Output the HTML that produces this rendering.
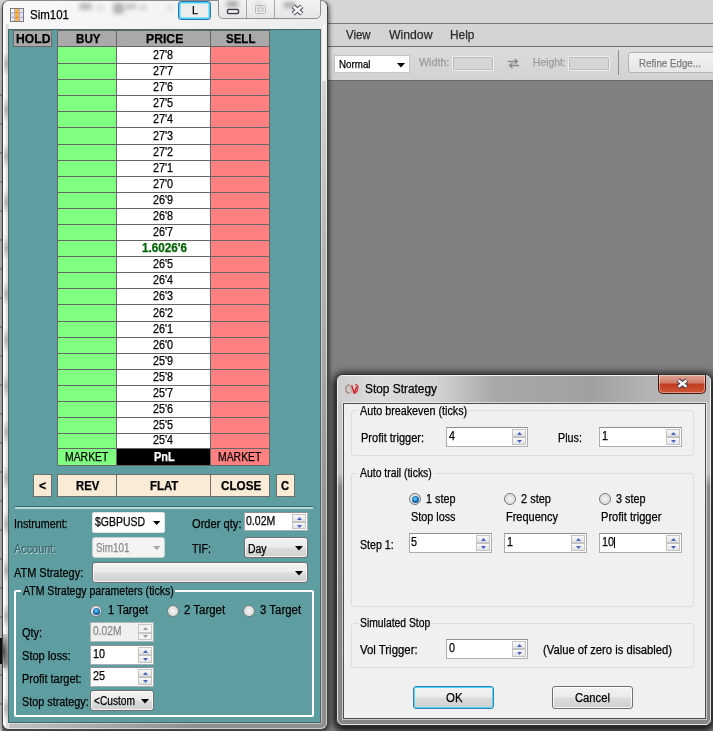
<!DOCTYPE html>
<html><head><meta charset="utf-8"><title>Sim101</title>
<style>
html,body{margin:0;padding:0;}
body{width:713px;height:731px;position:relative;overflow:hidden;background:#808080;font-family:"Liberation Sans",sans-serif;}
div{position:absolute;box-sizing:border-box;}
section{position:absolute;left:0;top:0;width:0;height:0;}
.t{-webkit-text-stroke:.25px currentColor;position:absolute;white-space:nowrap;line-height:1;transform-origin:0 0;display:block;}
svg{position:absolute;overflow:visible;}
.combo{border:1px solid #707070;border-radius:3px;background:linear-gradient(#f2f2f2 0%,#ebebeb 48%,#dddddd 52%,#cfcfcf 100%);box-shadow:inset 0 0 0 1px rgba(255,255,255,.7);}
.spin{background:#fff;border:1px solid #abadb3;border-top-color:#8e8f93;}
.sb{border:1px solid #c4c4c4;background:linear-gradient(#f8f8f8,#e4e4e4);}
.radio{border-radius:50%;border:1px solid #727c7d;background:radial-gradient(circle at 50% 50%,#f6f6f6 0,#e4e4e4 45%,#b8b8b8 100%);box-shadow:inset 0 0 0 1px rgba(255,255,255,.5);}
.btn{border:1px solid #707070;border-radius:3px;background:linear-gradient(#f2f2f2 0%,#ebebeb 48%,#dddddd 52%,#cfcfcf 100%);box-shadow:inset 0 0 0 1px rgba(255,255,255,.8);}
.gb{border:1px solid #d5dfe5;border-radius:3px;}

</style></head><body>
<section aria-label="Background application">
<div style="left:0px;top:0px;width:713px;height:23px;background:#d6d6d6;"></div>
<div style="left:0px;top:23px;width:713px;height:1px;background:#7a7a7a;"></div>
<div style="left:0px;top:24px;width:713px;height:22px;background:#d4d4d4;"></div>
<div style="left:0px;top:45.5px;width:713px;height:1.5px;background:#6e6e6e;"></div>
<div style="left:0px;top:47px;width:713px;height:33px;background:linear-gradient(#dcdcdc,#d2d2d2);"></div>
<div style="left:0px;top:80px;width:713px;height:1px;background:#6a6a6a;"></div>
<span class="t" style="left:346.0px;top:28px;font-size:13px;color:#2a2a2a;transform:scaleX(0.877);">View</span>
<span class="t" style="left:389.3px;top:28px;font-size:13px;color:#2a2a2a;transform:scaleX(0.940);">Window</span>
<span class="t" style="left:450.4px;top:28px;font-size:13px;color:#2a2a2a;transform:scaleX(0.913);">Help</span>
<span class="t" style="left:327.3px;top:58px;font-size:11px;color:#2a3a90;transform:scaleX(0.552);">:</span>
<div style="left:334px;top:55px;width:76px;height:18px;background:#fff;border:1px solid #c4c4c4;"></div>
<span class="t" style="left:338.5px;top:59px;font-size:11px;color:#000;transform:scaleX(0.888);">Normal</span>
<svg style="left:397px;top:63px" width="9" height="5"><path d="M0 0h8l-4 4.5z" fill="#000"/></svg>
<span class="t" style="left:418.7px;top:57px;font-size:11px;color:#9a9a9a;transform:scaleX(0.972);">Width:</span>
<div style="left:452px;top:56px;width:42px;height:15px;background:#d6d6d6;border:1px solid #efefef;border-radius:2px;box-shadow:inset 0 0 0 1px #bcbcbc;"></div>
<svg style="left:507px;top:58px" width="13" height="11"><path d="M1 3.5h9M7.5 1l3 2.5-3 2.5M12 7.5H3M5.500 5l-3 2.500 3 2.500" stroke="#8a8a8a" stroke-width="1.300" fill="none"/></svg>
<span class="t" style="left:533.0px;top:57px;font-size:11px;color:#9a9a9a;transform:scaleX(0.938);">Height:</span>
<div style="left:568px;top:56px;width:42px;height:15px;background:#d6d6d6;border:1px solid #efefef;border-radius:2px;box-shadow:inset 0 0 0 1px #bcbcbc;"></div>
<div style="left:618px;top:50px;width:1px;height:25px;background:#8c8c8c;"></div>
<div style="left:628px;top:52px;width:92px;height:21px;background:linear-gradient(#f3f3f3,#e6e6e6);border:1px solid #b4b4b4;border-radius:3px;"></div>
<span class="t" style="left:639.0px;top:58px;font-size:11.5px;color:#7a7a7a;transform:scaleX(0.850);">Refine Edge...</span>
</section>
<section aria-label="Sim101 SuperDOM window">
<div style="left:0px;top:81px;width:2px;height:650px;background:repeating-linear-gradient(180deg,#c4c4c4 0,#c4c4c4 13px,#6a6a6a 14px,#c4c4c4 15px,#c4c4c4 29px);"></div>
<div style="left:0px;top:638px;width:2px;height:26px;background:#111;"></div>
<div style="left:0px;top:0px;width:2px;height:81px;background:#cfcfcf;"></div>
<div style="left:2px;top:0px;width:326px;height:730px;background:#cccccc;border-radius:7px;box-shadow:2px 1px 4px 0 rgba(0,0,0,.32),0 3px 4px 0 rgba(0,0,0,.45);border:1px solid #444;border-top-color:#8a8a8a;"></div>
<div style="left:4px;top:2px;width:322px;height:726px;background:#8e8e8e;border-radius:5px;"></div>
<div style="left:7px;top:27px;width:315px;height:697px;background:#c2c2c2;border-radius:2px;"></div>
<div style="left:321px;top:81px;width:6px;height:479px;background:linear-gradient(180deg,rgba(255,255,255,.62) 0,rgba(255,255,255,.35) 35%,rgba(255,255,255,0) 100%);"></div>
<div style="left:9px;top:723px;width:191px;height:6px;background:linear-gradient(90deg,rgba(255,255,255,.45) 0,rgba(255,255,255,0) 100%);"></div>
<div style="left:3px;top:1px;width:324px;height:29px;background:linear-gradient(90deg,#f8f8f8 0%,#f3f3f3 50%,#ececec 100%);border-radius:6px 6px 0 0;"></div>
<div style="left:3px;top:24px;width:6px;height:705px;background:linear-gradient(90deg,#ffffff 0%,#f4f4f4 40%,#d8d8d8 65%,#ececec 100%);border-radius:0 0 0 6px;"></div>
<div style="left:4px;top:30px;width:4px;height:690px;background:repeating-linear-gradient(180deg,rgba(120,120,120,0) 0,rgba(120,120,120,0) 22px,rgba(120,120,120,.45) 34px,rgba(120,120,120,0) 46px);filter:blur(.6px);"></div>
<div style="left:3px;top:634px;width:6px;height:34px;background:radial-gradient(ellipse at 0% 50%,rgba(0,0,0,.75) 0,rgba(0,0,0,.35) 50%,rgba(0,0,0,0) 100%);"></div>
<div style="left:321px;top:24px;width:6px;height:57px;background:linear-gradient(90deg,#e2e2e2 0%,#fafafa 50%,#e8e8e8 100%);"></div>
<div style="left:8px;top:29px;width:313px;height:694px;background:#5f9ea0;border:1px solid #4a6466;"></div>
<div style="left:79px;top:3px;width:13px;height:7px;background:#bcbcbc;filter:blur(2px);border-radius:3px;"></div>
<div style="left:113px;top:3px;width:11px;height:11px;background:#b4b4b4;filter:blur(2px);border-radius:3px;"></div>
<div style="left:124px;top:4px;width:13px;height:5px;background:#c0c0c0;filter:blur(2px);border-radius:3px;"></div>
<div style="left:140px;top:5px;width:6px;height:5px;background:#cacaca;filter:blur(2px);border-radius:3px;"></div>
<div style="left:168px;top:6px;width:5px;height:4px;background:#d4d4d4;filter:blur(2px);border-radius:3px;"></div>
<div style="left:96px;top:6px;width:8px;height:4px;background:#dadada;filter:blur(2px);border-radius:3px;"></div>
<svg style="left:10px;top:8px" width="14" height="14" viewBox="0 0 14 14">
<rect x="0" y="0" width="14" height="14" fill="#7c7c7c"/>
<rect x="1" y="1" width="3.500" height="12" fill="#e4e4fa"/>
<rect x="9.500" y="1" width="3.500" height="12" fill="#e4e4fa"/>
<rect x="5" y="1" width="4" height="12" fill="#ffb13d"/>
<rect x="1" y="1" width="3" height="3" fill="#fff"/>
<path d="M1 4.700h3.500M1 9.300h3.500M9.500 4.700h3.500M9.500 9.300h3.500" stroke="#a9a9cf" stroke-width="1"/>
<path d="M5 4.700h4M5 9.300h4" stroke="#c98a3a" stroke-width=".8"/>
<path d="M4.700 1v12M9.300 1v12" stroke="#b4b4d4" stroke-width=".7"/>
</svg>
<span class="t" style="left:30.0px;top:9px;font-size:12px;color:#000;transform:scaleX(0.959);">Sim101</span>
<div style="left:178px;top:1px;width:33px;height:19px;border:1px solid #3577b6;border-radius:3px;background:#ededed;box-shadow:inset 0 0 0 1.500px #42d2f9;"></div>
<span class="t" style="left:191.5px;top:5px;font-size:11px;color:#000;transform:scaleX(0.983);">L</span>
<div style="left:218px;top:-4px;width:103px;height:23px;border:1px solid #8f8f8f;border-radius:0 0 5px 5px;background:linear-gradient(#f6f6f6,#e6e6e6);"></div>
<div style="left:226px;top:1px;width:13px;height:6px;background:#a8a8a8;filter:blur(2px);border-radius:3px;"></div>
<div style="left:283px;top:2px;width:13px;height:6px;background:#b0b0b0;filter:blur(2px);border-radius:3px;"></div>
<div style="left:255px;top:2px;width:7px;height:4px;background:#d0d0d0;filter:blur(2px);border-radius:3px;"></div>
<div style="left:246px;top:0px;width:1px;height:18px;background:#a8a8a8;"></div>
<div style="left:274px;top:0px;width:1px;height:18px;background:#a8a8a8;"></div>
<svg style="left:227px;top:9px" width="13" height="6"><rect x=".5" y=".5" width="11" height="4" rx="1" fill="#fff" stroke="#40404e" stroke-width="1.500"/></svg>
<svg style="left:255px;top:5px" width="12" height="10"><rect x=".5" y=".5" width="10" height="8" rx="1" fill="none" stroke="#b8b8b8" stroke-width="1"/><rect x="3" y="3" width="5" height="3" fill="none" stroke="#b8b8b8" stroke-width="1"/></svg>
<svg style="left:291px;top:4px" width="13" height="12" viewBox="0 0 13 12"><path d="M2.200 2.200L10.800 9.800M10.800 2.200L2.200 9.800" stroke="#4a4a58" stroke-width="4.600"/><path d="M2.500 2.500L10.500 9.500M10.500 2.500L2.500 9.500" stroke="#fbfbfb" stroke-width="2.600"/></svg>
<div style="left:57px;top:30px;width:213px;height:436px;background:#666;"></div>
<div style="left:13px;top:30px;width:39px;height:17px;background:#a9a9a9;border:1px solid #6a6a6a;"></div>
<div style="left:58px;top:31px;width:58px;height:15px;background:#a9a9a9;"></div>
<div style="left:117px;top:31px;width:93px;height:15px;background:#a9a9a9;"></div>
<div style="left:211px;top:31px;width:58px;height:15px;background:#a9a9a9;"></div>
<div style="left:58px;top:31px;width:58px;height:15px;background:#a9a9a9;"></div>
<div style="left:58px;top:47px;width:58px;height:16px;background:#80ff80;"></div>
<div style="left:117px;top:47px;width:93px;height:16px;background:#ffffff;"></div>
<div style="left:211px;top:47px;width:58px;height:16px;background:#ff8080;"></div>
<div style="left:58px;top:64px;width:58px;height:15px;background:#80ff80;"></div>
<div style="left:117px;top:64px;width:93px;height:15px;background:#ffffff;"></div>
<div style="left:211px;top:64px;width:58px;height:15px;background:#ff8080;"></div>
<div style="left:58px;top:80px;width:58px;height:15px;background:#80ff80;"></div>
<div style="left:117px;top:80px;width:93px;height:15px;background:#ffffff;"></div>
<div style="left:211px;top:80px;width:58px;height:15px;background:#ff8080;"></div>
<div style="left:58px;top:96px;width:58px;height:15px;background:#80ff80;"></div>
<div style="left:117px;top:96px;width:93px;height:15px;background:#ffffff;"></div>
<div style="left:211px;top:96px;width:58px;height:15px;background:#ff8080;"></div>
<div style="left:58px;top:112px;width:58px;height:15px;background:#80ff80;"></div>
<div style="left:117px;top:112px;width:93px;height:15px;background:#ffffff;"></div>
<div style="left:211px;top:112px;width:58px;height:15px;background:#ff8080;"></div>
<div style="left:58px;top:128px;width:58px;height:16px;background:#80ff80;"></div>
<div style="left:117px;top:128px;width:93px;height:16px;background:#ffffff;"></div>
<div style="left:211px;top:128px;width:58px;height:16px;background:#ff8080;"></div>
<div style="left:58px;top:145px;width:58px;height:15px;background:#80ff80;"></div>
<div style="left:117px;top:145px;width:93px;height:15px;background:#ffffff;"></div>
<div style="left:211px;top:145px;width:58px;height:15px;background:#ff8080;"></div>
<div style="left:58px;top:161px;width:58px;height:15px;background:#80ff80;"></div>
<div style="left:117px;top:161px;width:93px;height:15px;background:#ffffff;"></div>
<div style="left:211px;top:161px;width:58px;height:15px;background:#ff8080;"></div>
<div style="left:58px;top:177px;width:58px;height:15px;background:#80ff80;"></div>
<div style="left:117px;top:177px;width:93px;height:15px;background:#ffffff;"></div>
<div style="left:211px;top:177px;width:58px;height:15px;background:#ff8080;"></div>
<div style="left:58px;top:193px;width:58px;height:15px;background:#80ff80;"></div>
<div style="left:117px;top:193px;width:93px;height:15px;background:#ffffff;"></div>
<div style="left:211px;top:193px;width:58px;height:15px;background:#ff8080;"></div>
<div style="left:58px;top:209px;width:58px;height:15px;background:#80ff80;"></div>
<div style="left:117px;top:209px;width:93px;height:15px;background:#ffffff;"></div>
<div style="left:211px;top:209px;width:58px;height:15px;background:#ff8080;"></div>
<div style="left:58px;top:225px;width:58px;height:15px;background:#80ff80;"></div>
<div style="left:117px;top:225px;width:93px;height:15px;background:#ffffff;"></div>
<div style="left:211px;top:225px;width:58px;height:15px;background:#ff8080;"></div>
<div style="left:58px;top:241px;width:58px;height:15px;background:#80ff80;"></div>
<div style="left:117px;top:241px;width:93px;height:15px;background:#ffffff;"></div>
<div style="left:211px;top:241px;width:58px;height:15px;background:#ff8080;"></div>
<div style="left:58px;top:257px;width:58px;height:15px;background:#80ff80;"></div>
<div style="left:117px;top:257px;width:93px;height:15px;background:#ffffff;"></div>
<div style="left:211px;top:257px;width:58px;height:15px;background:#ff8080;"></div>
<div style="left:58px;top:273px;width:58px;height:15px;background:#80ff80;"></div>
<div style="left:117px;top:273px;width:93px;height:15px;background:#ffffff;"></div>
<div style="left:211px;top:273px;width:58px;height:15px;background:#ff8080;"></div>
<div style="left:58px;top:289px;width:58px;height:15px;background:#80ff80;"></div>
<div style="left:117px;top:289px;width:93px;height:15px;background:#ffffff;"></div>
<div style="left:211px;top:289px;width:58px;height:15px;background:#ff8080;"></div>
<div style="left:58px;top:305px;width:58px;height:16px;background:#80ff80;"></div>
<div style="left:117px;top:305px;width:93px;height:16px;background:#ffffff;"></div>
<div style="left:211px;top:305px;width:58px;height:16px;background:#ff8080;"></div>
<div style="left:58px;top:322px;width:58px;height:15px;background:#80ff80;"></div>
<div style="left:117px;top:322px;width:93px;height:15px;background:#ffffff;"></div>
<div style="left:211px;top:322px;width:58px;height:15px;background:#ff8080;"></div>
<div style="left:58px;top:338px;width:58px;height:15px;background:#80ff80;"></div>
<div style="left:117px;top:338px;width:93px;height:15px;background:#ffffff;"></div>
<div style="left:211px;top:338px;width:58px;height:15px;background:#ff8080;"></div>
<div style="left:58px;top:354px;width:58px;height:15px;background:#80ff80;"></div>
<div style="left:117px;top:354px;width:93px;height:15px;background:#ffffff;"></div>
<div style="left:211px;top:354px;width:58px;height:15px;background:#ff8080;"></div>
<div style="left:58px;top:370px;width:58px;height:15px;background:#80ff80;"></div>
<div style="left:117px;top:370px;width:93px;height:15px;background:#ffffff;"></div>
<div style="left:211px;top:370px;width:58px;height:15px;background:#ff8080;"></div>
<div style="left:58px;top:386px;width:58px;height:15px;background:#80ff80;"></div>
<div style="left:117px;top:386px;width:93px;height:15px;background:#ffffff;"></div>
<div style="left:211px;top:386px;width:58px;height:15px;background:#ff8080;"></div>
<div style="left:58px;top:402px;width:58px;height:15px;background:#80ff80;"></div>
<div style="left:117px;top:402px;width:93px;height:15px;background:#ffffff;"></div>
<div style="left:211px;top:402px;width:58px;height:15px;background:#ff8080;"></div>
<div style="left:58px;top:418px;width:58px;height:15px;background:#80ff80;"></div>
<div style="left:117px;top:418px;width:93px;height:15px;background:#ffffff;"></div>
<div style="left:211px;top:418px;width:58px;height:15px;background:#ff8080;"></div>
<div style="left:58px;top:434px;width:58px;height:14px;background:#80ff80;"></div>
<div style="left:117px;top:434px;width:93px;height:14px;background:#ffffff;"></div>
<div style="left:211px;top:434px;width:58px;height:14px;background:#ff8080;"></div>
<div style="left:58px;top:449px;width:58px;height:16px;background:#80ff80;"></div>
<div style="left:117px;top:449px;width:93px;height:16px;background:#000;"></div>
<div style="left:211px;top:449px;width:58px;height:16px;background:#ff8080;"></div>
<span class="t" style="left:15.5px;top:33px;font-size:12px;font-weight:bold;color:#000;transform:scaleX(1.014);">HOLD</span>
<span class="t" style="left:75.8px;top:33px;font-size:12px;font-weight:bold;color:#000;transform:scaleX(0.968);">BUY</span>
<span class="t" style="left:145.5px;top:33px;font-size:12px;font-weight:bold;color:#000;transform:scaleX(1.017);">PRICE</span>
<span class="t" style="left:226.2px;top:33px;font-size:12px;font-weight:bold;color:#000;transform:scaleX(0.959);">SELL</span>
<span class="t" style="left:153.2px;top:49px;font-size:12px;color:#000;transform:scaleX(0.896);">27'8</span>
<span class="t" style="left:153.2px;top:65px;font-size:12px;color:#000;transform:scaleX(0.896);">27'7</span>
<span class="t" style="left:153.2px;top:81px;font-size:12px;color:#000;transform:scaleX(0.896);">27'6</span>
<span class="t" style="left:153.2px;top:97px;font-size:12px;color:#000;transform:scaleX(0.896);">27'5</span>
<span class="t" style="left:153.2px;top:113px;font-size:12px;color:#000;transform:scaleX(0.896);">27'4</span>
<span class="t" style="left:153.2px;top:130px;font-size:12px;color:#000;transform:scaleX(0.896);">27'3</span>
<span class="t" style="left:153.2px;top:146px;font-size:12px;color:#000;transform:scaleX(0.896);">27'2</span>
<span class="t" style="left:153.2px;top:162px;font-size:12px;color:#000;transform:scaleX(0.896);">27'1</span>
<span class="t" style="left:153.2px;top:178px;font-size:12px;color:#000;transform:scaleX(0.896);">27'0</span>
<span class="t" style="left:153.2px;top:194px;font-size:12px;color:#000;transform:scaleX(0.896);">26'9</span>
<span class="t" style="left:153.2px;top:210px;font-size:12px;color:#000;transform:scaleX(0.896);">26'8</span>
<span class="t" style="left:153.2px;top:226px;font-size:12px;color:#000;transform:scaleX(0.896);">26'7</span>
<span class="t" style="left:141.8px;top:242px;font-size:12px;font-weight:bold;color:#006400;transform:scaleX(0.975);">1.6026'6</span>
<span class="t" style="left:153.2px;top:258px;font-size:12px;color:#000;transform:scaleX(0.896);">26'5</span>
<span class="t" style="left:153.2px;top:274px;font-size:12px;color:#000;transform:scaleX(0.896);">26'4</span>
<span class="t" style="left:153.2px;top:290px;font-size:12px;color:#000;transform:scaleX(0.896);">26'3</span>
<span class="t" style="left:153.2px;top:307px;font-size:12px;color:#000;transform:scaleX(0.896);">26'2</span>
<span class="t" style="left:153.2px;top:323px;font-size:12px;color:#000;transform:scaleX(0.896);">26'1</span>
<span class="t" style="left:153.2px;top:339px;font-size:12px;color:#000;transform:scaleX(0.896);">26'0</span>
<span class="t" style="left:153.2px;top:355px;font-size:12px;color:#000;transform:scaleX(0.896);">25'9</span>
<span class="t" style="left:153.2px;top:371px;font-size:12px;color:#000;transform:scaleX(0.896);">25'8</span>
<span class="t" style="left:153.2px;top:387px;font-size:12px;color:#000;transform:scaleX(0.896);">25'7</span>
<span class="t" style="left:153.2px;top:403px;font-size:12px;color:#000;transform:scaleX(0.896);">25'6</span>
<span class="t" style="left:153.2px;top:419px;font-size:12px;color:#000;transform:scaleX(0.896);">25'5</span>
<span class="t" style="left:153.2px;top:434px;font-size:12px;color:#000;transform:scaleX(0.896);">25'4</span>
<span class="t" style="left:65.3px;top:451px;font-size:12px;color:#000;transform:scaleX(0.868);">MARKET</span>
<span class="t" style="left:154.0px;top:451px;font-size:12px;font-weight:bold;color:#fff;transform:scaleX(0.913);">PnL</span>
<span class="t" style="left:218.3px;top:451px;font-size:12px;color:#000;transform:scaleX(0.868);">MARKET</span>
<div style="left:33px;top:474px;width:19px;height:23px;background:#faebd7;border:1px solid #6e6e6e;"></div>
<div style="left:57px;top:474px;width:60px;height:23px;background:#faebd7;border:1px solid #6e6e6e;"></div>
<div style="left:116px;top:474px;width:95px;height:23px;background:#faebd7;border:1px solid #6e6e6e;"></div>
<div style="left:210px;top:474px;width:60px;height:23px;background:#faebd7;border:1px solid #6e6e6e;"></div>
<div style="left:276px;top:474px;width:19px;height:23px;background:#faebd7;border:1px solid #6e6e6e;"></div>
<span class="t" style="left:39.2px;top:479px;font-size:13px;font-weight:bold;color:#000;transform:scaleX(0.934);">&lt;</span>
<span class="t" style="left:75.8px;top:480px;font-size:12px;font-weight:bold;color:#000;transform:scaleX(0.941);">REV</span>
<span class="t" style="left:150.0px;top:480px;font-size:12px;font-weight:bold;color:#000;transform:scaleX(0.951);">FLAT</span>
<span class="t" style="left:220.7px;top:480px;font-size:12px;font-weight:bold;color:#000;transform:scaleX(0.975);">CLOSE</span>
<span class="t" style="left:281.3px;top:480px;font-size:12px;font-weight:bold;color:#000;transform:scaleX(0.937);">C</span>
<div style="left:15px;top:506px;width:298px;height:1px;background:#3f6a6c;"></div>
<div style="left:15px;top:507px;width:298px;height:2px;background:#b6dadb;"></div>
<span class="t" style="left:13.7px;top:518px;font-size:12px;color:#000;transform:scaleX(0.893);">Instrument:</span>
<div style="left:92px;top:512px;width:73px;height:21px;background:#fff;border:1px solid #e0e6e6;border-radius:2px;"></div>
<span class="t" style="left:95.0px;top:516px;font-size:12px;color:#000;transform:scaleX(0.872);">$GBPUSD</span>
<svg style="left:153px;top:521px" width="8" height="4"><path d="M0 0h7.400l-3.700 4z" fill="#000"/></svg>
<span class="t" style="left:192.3px;top:518px;font-size:12px;color:#000;transform:scaleX(0.928);">Order qty:</span>
<div class="spin" style="left:244px;top:512px;width:64px;height:19px;"></div>
<span class="t" style="left:246.4px;top:515px;font-size:12px;color:#000;transform:scaleX(0.878);">0.02M</span>
<div class="sb" style="left:292px;top:514px;width:14px;height:8px;"></div>
<div class="sb" style="left:292px;top:522px;width:14px;height:7px;"></div>
<svg style="left:296.5px;top:516.5px" width="5" height="3"><path d="M0 3l2.500-3 2.500 3z" fill="#4a62c4"/></svg>
<svg style="left:296.5px;top:524.5px" width="5" height="3"><path d="M0 0l2.500 3 2.500-3z" fill="#4a62c4"/></svg>
<span class="t" style="left:13.7px;top:543px;font-size:12px;color:#3d6668;transform:scaleX(0.906);text-shadow:1px 1px 0 #b4d4d5;">Account:</span>
<div style="left:92px;top:537px;width:73px;height:20.5px;background:#f4f4f4;border:1px solid #c8d0d0;border-radius:3px;"></div>
<span class="t" style="left:96.4px;top:542px;font-size:12px;color:#8a8a8a;transform:scaleX(0.821);">Sim101</span>
<svg style="left:153px;top:546px" width="8" height="4"><path d="M0 0h7.400l-3.700 4z" fill="#a4a4a4"/></svg>
<span class="t" style="left:192.4px;top:543px;font-size:12px;color:#000;transform:scaleX(0.887);">TIF:</span>
<div class="combo" style="left:244px;top:537px;width:64px;height:20.5px;"></div>
<span class="t" style="left:247.8px;top:543px;font-size:12px;color:#000;transform:scaleX(0.871);">Day</span>
<svg style="left:295px;top:546px" width="9" height="5"><path d="M0 0h8l-4 4.5z" fill="#000"/></svg>
<span class="t" style="left:14.3px;top:567px;font-size:12px;color:#000;transform:scaleX(0.913);">ATM Strategy:</span>
<div class="combo" style="left:92px;top:562px;width:216px;height:21px;"></div>
<svg style="left:295px;top:571px" width="9" height="5"><path d="M0 0h8l-4 4.5z" fill="#000"/></svg>
<div style="left:14px;top:590px;width:300px;height:127px;border:2px solid #fff;border-radius:2px;"></div>
<div style="left:21px;top:586px;width:154px;height:12px;background:#5f9ea0;"></div>
<span class="t" style="left:23.1px;top:585px;font-size:12px;color:#000;transform:scaleX(0.877);">ATM Strategy parameters (ticks)</span>
<div class="radio" style="left:90.3px;top:605px;width:12.0px;height:12px;"></div>
<div style="left:92.8px;top:607.5px;width:7.0px;height:7.0px;border-radius:50%;background:radial-gradient(circle at 45% 40%,#7fd4f4 0,#3aa0dc 25%,#1668ac 55%,#0a3a72 90%);"></div>
<span class="t" style="left:107.8px;top:604px;font-size:12px;color:#000;transform:scaleX(0.927);">1 Target</span>
<div class="radio" style="left:167px;top:605px;width:12px;height:12px;"></div>
<span class="t" style="left:183.8px;top:604px;font-size:12px;color:#000;transform:scaleX(0.953);">2 Target</span>
<div class="radio" style="left:243px;top:605px;width:12px;height:12px;"></div>
<span class="t" style="left:260.1px;top:604px;font-size:12px;color:#000;transform:scaleX(0.953);">3 Target</span>
<span class="t" style="left:22.2px;top:627px;font-size:12px;color:#000;transform:scaleX(0.917);">Qty:</span>
<div style="left:90px;top:622px;width:64px;height:20px;background:#f0f0f0;border:1px solid #aeb8b8;"></div>
<span class="t" style="left:92.8px;top:625px;font-size:12px;color:#8a8a8a;transform:scaleX(0.857);">0.02M</span>
<div style="left:138px;top:624px;width:14px;height:9px;border:1px solid #c8c8c8;background:#f4f4f4;"></div>
<div style="left:138px;top:633px;width:14px;height:7px;border:1px solid #c8c8c8;background:#f4f4f4;"></div>
<svg style="left:142.500px;top:627px" width="5" height="3"><path d="M0 3l2.500-3 2.500 3z" fill="#9a9a9a"/></svg>
<svg style="left:142.500px;top:635px" width="5" height="3"><path d="M0 0l2.500 3 2.500-3z" fill="#9a9a9a"/></svg>
<span class="t" style="left:22.2px;top:650px;font-size:12px;color:#000;transform:scaleX(0.923);">Stop loss:</span>
<div class="spin" style="left:90px;top:645px;width:64px;height:20px;"></div>
<span class="t" style="left:93.2px;top:648px;font-size:12px;color:#000;transform:scaleX(0.900);">10</span>
<div class="sb" style="left:138px;top:647px;width:14px;height:8px;"></div>
<div class="sb" style="left:138px;top:655px;width:14px;height:8px;"></div>
<svg style="left:142.5px;top:649.5px" width="5" height="3"><path d="M0 3l2.500-3 2.500 3z" fill="#4a62c4"/></svg>
<svg style="left:142.5px;top:657.5px" width="5" height="3"><path d="M0 0l2.500 3 2.500-3z" fill="#4a62c4"/></svg>
<span class="t" style="left:22.2px;top:673px;font-size:12px;color:#000;transform:scaleX(0.912);">Profit target:</span>
<div class="spin" style="left:90px;top:667px;width:64px;height:20px;"></div>
<span class="t" style="left:92.8px;top:670px;font-size:12px;color:#000;transform:scaleX(0.900);">25</span>
<div class="sb" style="left:138px;top:669px;width:14px;height:8px;"></div>
<div class="sb" style="left:138px;top:677px;width:14px;height:8px;"></div>
<svg style="left:142.5px;top:671.5px" width="5" height="3"><path d="M0 3l2.500-3 2.500 3z" fill="#4a62c4"/></svg>
<svg style="left:142.5px;top:679.5px" width="5" height="3"><path d="M0 0l2.500 3 2.500-3z" fill="#4a62c4"/></svg>
<span class="t" style="left:22.2px;top:696px;font-size:12px;color:#000;transform:scaleX(0.902);">Stop strategy:</span>
<div class="combo" style="left:90px;top:690px;width:64px;height:21px;"></div>
<span class="t" style="left:94.0px;top:695px;font-size:12px;color:#000;transform:scaleX(0.848);">&lt;Custom</span>
<svg style="left:141px;top:699px" width="9" height="5"><path d="M0 0h8l-4 4.5z" fill="#000"/></svg>
</section>
<section aria-label="Stop Strategy dialog">
<div style="left:336px;top:374px;width:375.5px;height:352px;background:linear-gradient(#c6c6c6 0,#c4c4c4 28%,#8a8a8a 32%,#868686 100%);border-radius:7px;box-shadow:0 1px 7px 3px rgba(0,0,0,.62),0 4px 6px 1px rgba(0,0,0,.5);border:1px solid #303030;"></div>
<div style="left:337px;top:375px;width:373.5px;height:350px;border:1px solid rgba(255,255,255,.75);border-radius:6px;"></div>
<div style="left:338px;top:376px;width:371.5px;height:27px;background:linear-gradient(90deg,#cdcdcd 0%,#dcdcdc 10%,#d4d4d4 26%,#a8a8a8 42%,#a0a0a0 68%,#b4b4b4 84%,#bcbcbc 100%);border-radius:5px 5px 0 0;"></div>
<div style="left:343px;top:403px;width:362.5px;height:316px;background:#f0f0f0;border:1px solid #4e4e4e;box-shadow:0 0 0 1px rgba(255,255,255,.55);"></div>
<svg style="left:345px;top:384px" width="14" height="10" viewBox="0 0 14 10">
<path d="M4.600 .5C1.800 1.200 .4 3.800 1 6.300 1.500 8.200 3 9.200 4.800 9.300" fill="none" stroke="#9c8478" stroke-width="1.700" opacity=".8"/>
<path d="M4.300 1C5.300 3 6.200 6 6.800 8.800" fill="none" stroke="#b8a08e" stroke-width="1.500" opacity=".75"/>
<path d="M6.600 1.200L9.300 9.300 11.800 2.600" fill="none" stroke="#cf2a32" stroke-width="1.600" stroke-linejoin="round"/>
<path d="M10.200 .4C13.600 1 14.500 5.200 10.300 9.200" fill="none" stroke="#cf2a32" stroke-width="1.200" opacity=".9"/>
</svg>
<span class="t" style="left:365.2px;top:383px;font-size:12.5px;color:#000;transform:scaleX(0.950);">Stop Strategy</span>
<div style="left:658px;top:375px;width:47.5px;height:19px;border:1px solid #43160f;border-radius:0 0 5px 5px;border-top:none;background:linear-gradient(#e0a596 0%,#d07a66 45%,#c03a1f 50%,#cf5836 100%);box-shadow:inset 0 0 0 1px rgba(255,255,255,.4);"></div>
<svg style="left:676px;top:378px" width="13" height="11" viewBox="0 0 13 11"><path d="M2.200 2.200L10.800 9M10.800 2.200L2.200 9" stroke="#3c3440" stroke-width="4.600"/><path d="M2.500 2.500L10.500 8.700M10.500 2.500L2.500 8.700" stroke="#fbfbfb" stroke-width="2.600"/></svg>
<div class="gb" style="left:351px;top:410px;width:343px;height:46px;"></div>
<div style="left:358px;top:404px;width:111px;height:14px;background:#f0f0f0;"></div>
<span class="t" style="left:360.0px;top:405px;font-size:12px;color:#000;transform:scaleX(0.898);">Auto breakeven (ticks)</span>
<span class="t" style="left:360.6px;top:432px;font-size:12px;color:#000;transform:scaleX(0.918);">Profit trigger:</span>
<div class="spin" style="left:446px;top:427px;width:82px;height:20px;"></div>
<span class="t" style="left:448.6px;top:430px;font-size:12px;color:#000;transform:scaleX(0.900);">4</span>
<div class="sb" style="left:512px;top:429px;width:14px;height:8px;"></div>
<div class="sb" style="left:512px;top:437px;width:14px;height:8px;"></div>
<svg style="left:516.5px;top:431.5px" width="5" height="3"><path d="M0 3l2.500-3 2.500 3z" fill="#4a62c4"/></svg>
<svg style="left:516.5px;top:439.5px" width="5" height="3"><path d="M0 0l2.500 3 2.500-3z" fill="#4a62c4"/></svg>
<span class="t" style="left:558.4px;top:432px;font-size:12px;color:#000;transform:scaleX(0.895);">Plus:</span>
<div class="spin" style="left:599px;top:427px;width:83px;height:20px;"></div>
<span class="t" style="left:601.6px;top:430px;font-size:12px;color:#000;transform:scaleX(0.900);">1</span>
<div class="sb" style="left:666px;top:429px;width:14px;height:8px;"></div>
<div class="sb" style="left:666px;top:437px;width:14px;height:8px;"></div>
<svg style="left:670.5px;top:431.5px" width="5" height="3"><path d="M0 3l2.500-3 2.500 3z" fill="#4a62c4"/></svg>
<svg style="left:670.5px;top:439.5px" width="5" height="3"><path d="M0 0l2.500 3 2.500-3z" fill="#4a62c4"/></svg>
<div class="gb" style="left:351px;top:473px;width:343px;height:134px;"></div>
<div style="left:358px;top:467px;width:76px;height:14px;background:#f0f0f0;"></div>
<span class="t" style="left:360.2px;top:467px;font-size:12px;color:#000;transform:scaleX(0.868);">Auto trail (ticks)</span>
<div class="radio" style="left:409px;top:493px;width:12px;height:12px;"></div>
<div style="left:411.5px;top:495.5px;width:7.0px;height:7.0px;border-radius:50%;background:radial-gradient(circle at 45% 40%,#7fd4f4 0,#3aa0dc 25%,#1668ac 55%,#0a3a72 90%);"></div>
<span class="t" style="left:426.4px;top:493px;font-size:12px;color:#000;transform:scaleX(0.899);">1 step</span>
<div class="radio" style="left:503.5px;top:493px;width:12.0px;height:12px;"></div>
<span class="t" style="left:520.9px;top:493px;font-size:12px;color:#000;transform:scaleX(0.917);">2 step</span>
<div class="radio" style="left:598.7px;top:493px;width:12.0px;height:12px;"></div>
<span class="t" style="left:616.2px;top:493px;font-size:12px;color:#000;transform:scaleX(0.902);">3 step</span>
<span class="t" style="left:411.3px;top:511px;font-size:12px;color:#000;transform:scaleX(0.901);">Stop loss</span>
<span class="t" style="left:506.0px;top:511px;font-size:12px;color:#000;transform:scaleX(0.915);">Frequency</span>
<span class="t" style="left:601.4px;top:511px;font-size:12px;color:#000;transform:scaleX(0.923);">Profit trigger</span>
<span class="t" style="left:360.2px;top:539px;font-size:12px;color:#000;transform:scaleX(0.886);">Step 1:</span>
<div class="spin" style="left:409px;top:533px;width:83px;height:20px;"></div>
<span class="t" style="left:411.0px;top:536px;font-size:12px;color:#000;transform:scaleX(0.900);">5</span>
<div class="sb" style="left:476px;top:535px;width:14px;height:8px;"></div>
<div class="sb" style="left:476px;top:543px;width:14px;height:8px;"></div>
<svg style="left:480.5px;top:537.5px" width="5" height="3"><path d="M0 3l2.500-3 2.500 3z" fill="#4a62c4"/></svg>
<svg style="left:480.5px;top:545.5px" width="5" height="3"><path d="M0 0l2.500 3 2.500-3z" fill="#4a62c4"/></svg>
<div class="spin" style="left:504px;top:533px;width:83px;height:20px;"></div>
<span class="t" style="left:506.6px;top:536px;font-size:12px;color:#000;transform:scaleX(0.900);">1</span>
<div class="sb" style="left:571px;top:535px;width:14px;height:8px;"></div>
<div class="sb" style="left:571px;top:543px;width:14px;height:8px;"></div>
<svg style="left:575.5px;top:537.5px" width="5" height="3"><path d="M0 3l2.500-3 2.500 3z" fill="#4a62c4"/></svg>
<svg style="left:575.5px;top:545.5px" width="5" height="3"><path d="M0 0l2.500 3 2.500-3z" fill="#4a62c4"/></svg>
<div class="spin" style="left:599px;top:533px;width:83px;height:20px;"></div>
<span class="t" style="left:601.6px;top:536px;font-size:12px;color:#000;transform:scaleX(0.900);">10</span>
<div class="sb" style="left:666px;top:535px;width:14px;height:8px;"></div>
<div class="sb" style="left:666px;top:543px;width:14px;height:8px;"></div>
<svg style="left:670.5px;top:537.5px" width="5" height="3"><path d="M0 3l2.500-3 2.500 3z" fill="#4a62c4"/></svg>
<svg style="left:670.5px;top:545.5px" width="5" height="3"><path d="M0 0l2.500 3 2.500-3z" fill="#4a62c4"/></svg>
<div style="left:613.5px;top:537px;width:1.0px;height:11px;background:#000;"></div>
<div class="gb" style="left:351px;top:623px;width:343px;height:45px;"></div>
<div style="left:358px;top:617px;width:64px;height:14px;background:#f0f0f0;"></div>
<span class="t" style="left:359.8px;top:617px;font-size:12px;color:#000;transform:scaleX(0.863);">Simulated Stop</span>
<span class="t" style="left:360.0px;top:644px;font-size:12px;color:#000;transform:scaleX(0.949);">Vol Trigger:</span>
<div class="spin" style="left:446px;top:639px;width:82px;height:20px;"></div>
<span class="t" style="left:448.6px;top:642px;font-size:12px;color:#000;transform:scaleX(0.900);">0</span>
<div class="sb" style="left:512px;top:641px;width:14px;height:8px;"></div>
<div class="sb" style="left:512px;top:649px;width:14px;height:8px;"></div>
<svg style="left:516.5px;top:643.5px" width="5" height="3"><path d="M0 3l2.500-3 2.500 3z" fill="#4a62c4"/></svg>
<svg style="left:516.5px;top:651.5px" width="5" height="3"><path d="M0 0l2.500 3 2.500-3z" fill="#4a62c4"/></svg>
<span class="t" style="left:543.0px;top:644px;font-size:12px;color:#000;transform:scaleX(0.936);">(Value of zero is disabled)</span>
<div style="left:413px;top:685.5px;width:81px;height:23.5px;border:1px solid #3c7fb1;border-radius:3px;background:linear-gradient(#f2f2f2 0%,#ebebeb 48%,#dddddd 52%,#cfcfcf 100%);box-shadow:inset 0 0 0 1px #48d8fb;"></div>
<span class="t" style="left:445.5px;top:692px;font-size:12px;color:#000;transform:scaleX(0.952);">OK</span>
<div class="btn" style="left:552px;top:685.5px;width:81px;height:23.5px;"></div>
<span class="t" style="left:575.0px;top:692px;font-size:12px;color:#000;transform:scaleX(0.936);">Cancel</span>
</section>
</body></html>
